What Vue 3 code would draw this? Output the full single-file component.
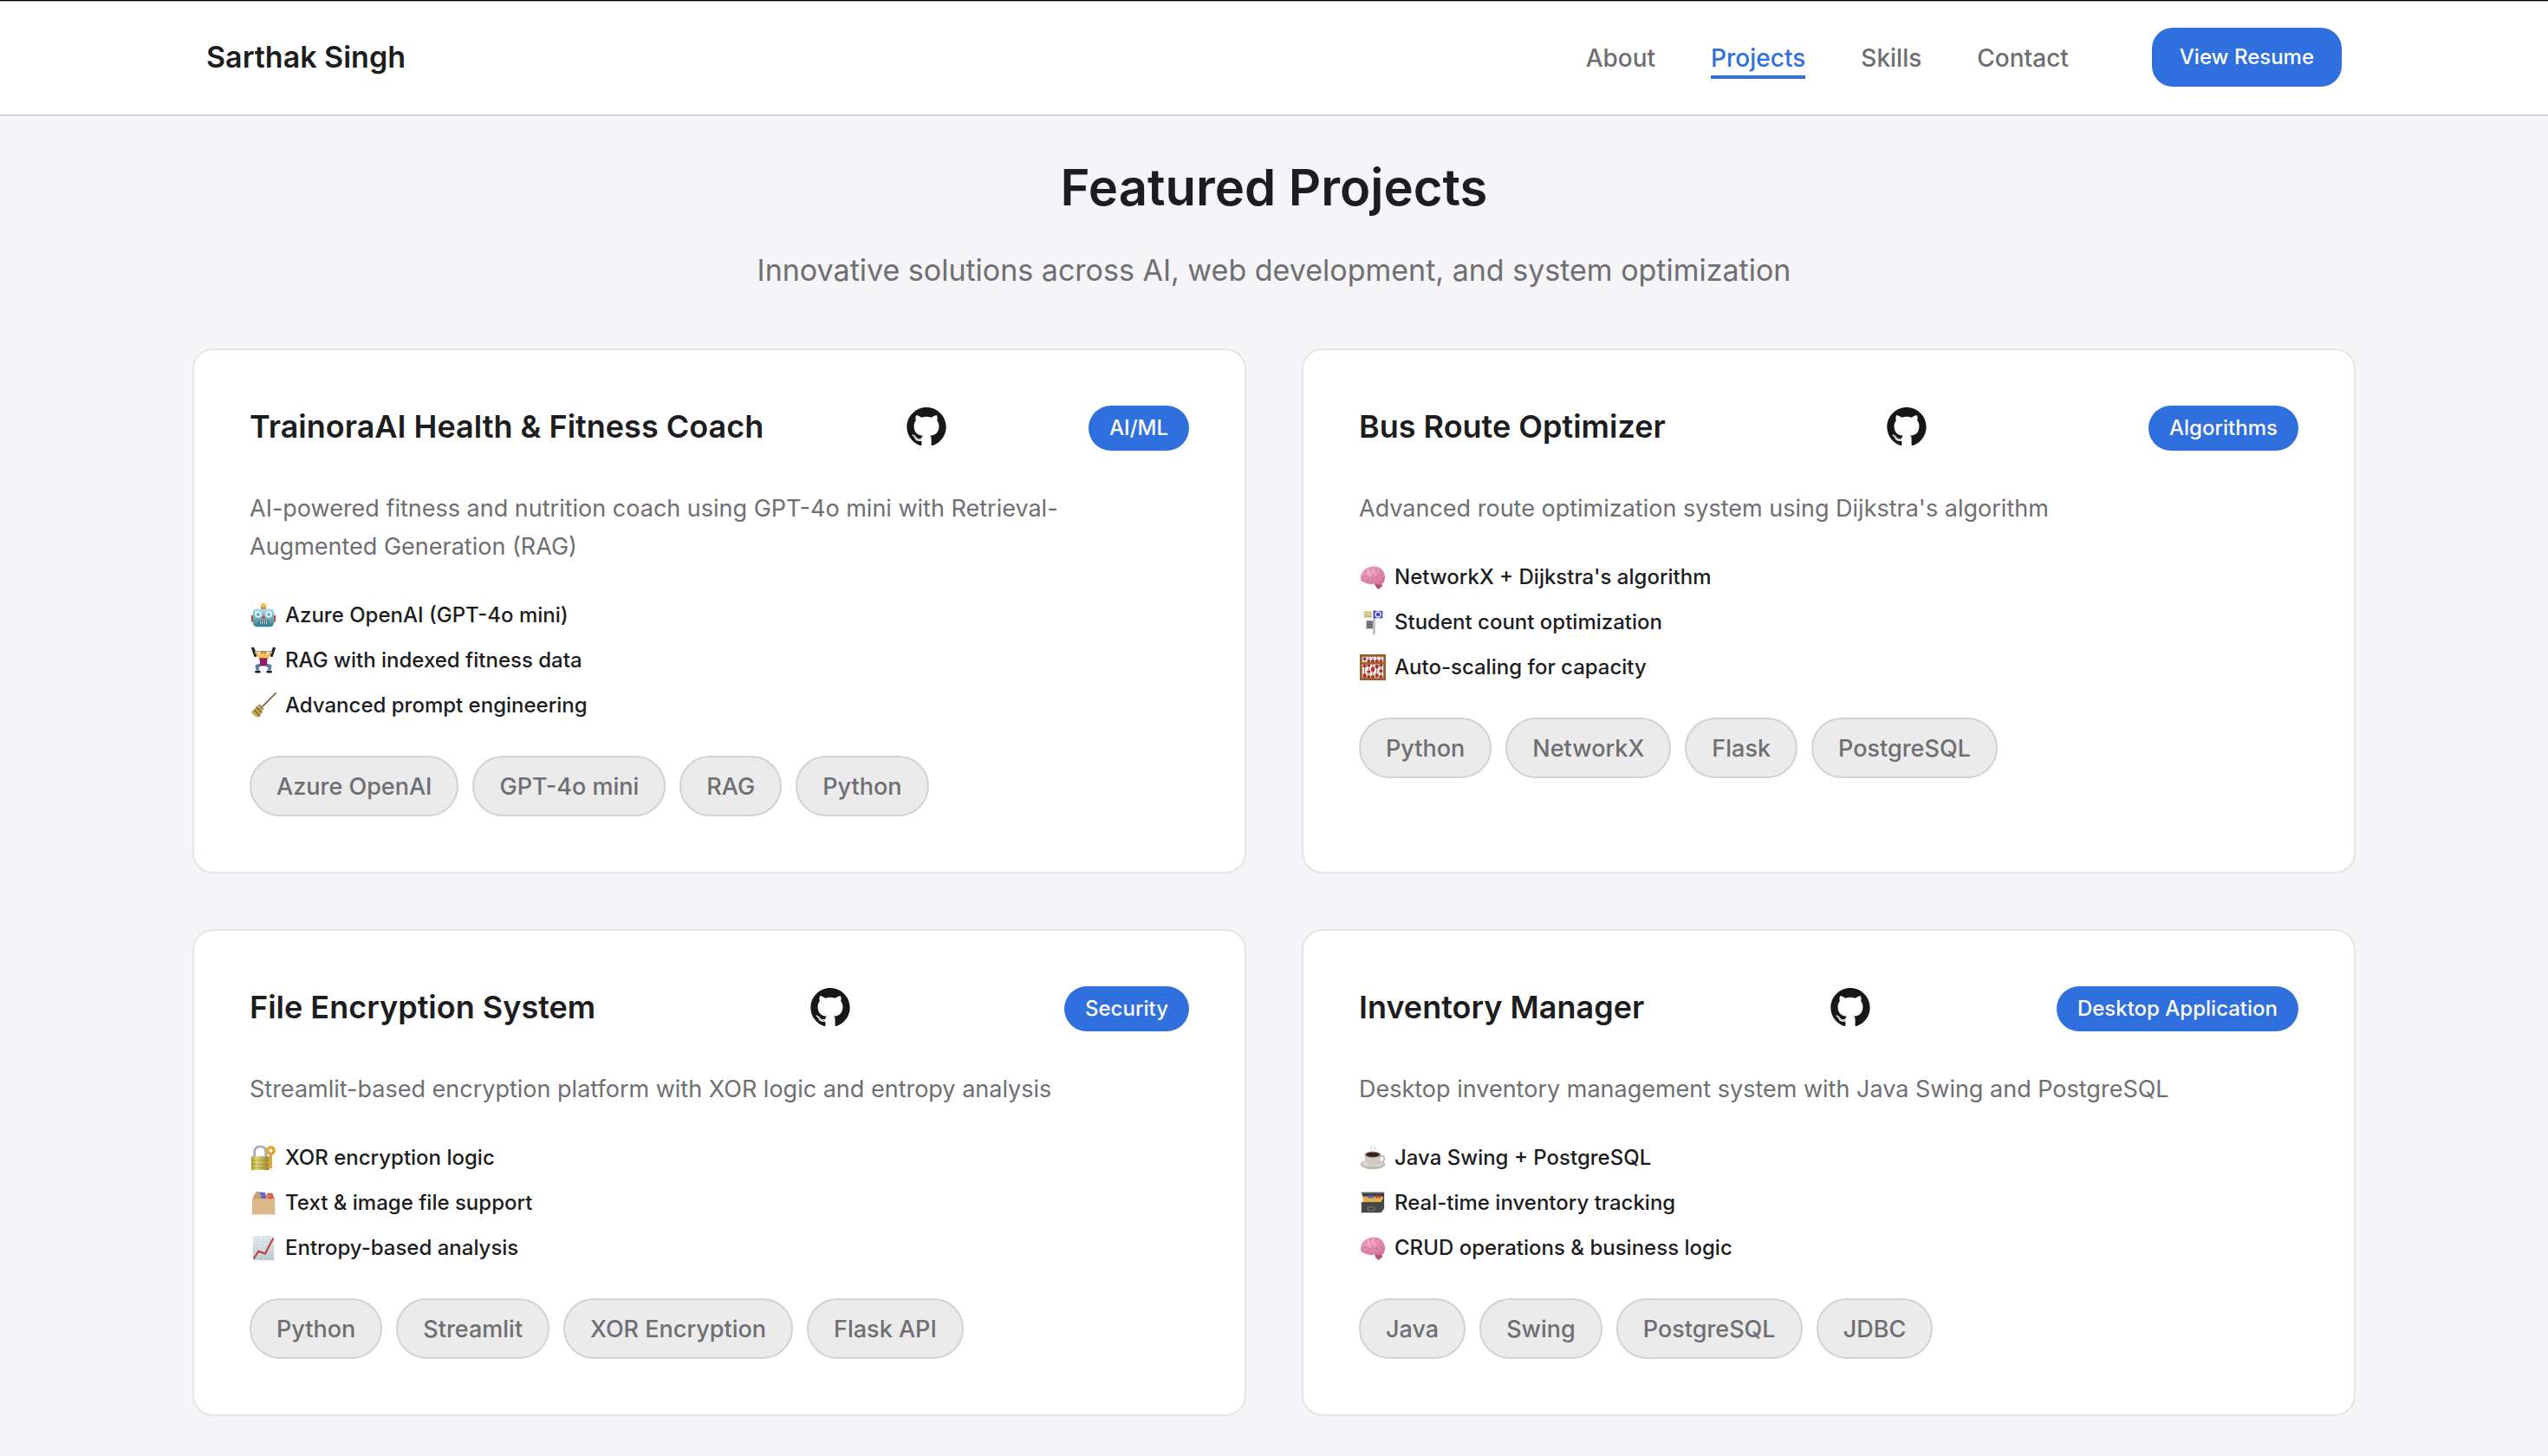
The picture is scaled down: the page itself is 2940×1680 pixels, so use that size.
<script setup>
const navLinks = [
  { label: 'About', href: '#about' },
  { label: 'Projects', href: '#projects', active: true },
  { label: 'Skills', href: '#skills' },
  { label: 'Contact', href: '#contact' },
]

const projects = [
  {
    title: 'TrainoraAI Health & Fitness Coach',
    category: 'AI/ML',
    description:
      'AI-powered fitness and nutrition coach using GPT-4o mini with Retrieval-Augmented Generation (RAG)',
    features: [
      { icon: 'robot', text: 'Azure OpenAI (GPT-4o mini)' },
      { icon: 'lifter', text: 'RAG with indexed fitness data' },
      { icon: 'broom', text: 'Advanced prompt engineering' },
    ],
    tags: ['Azure OpenAI', 'GPT-4o mini', 'RAG', 'Python'],
  },
  {
    title: 'Bus Route Optimizer',
    category: 'Algorithms',
    description: "Advanced route optimization system using Dijkstra's algorithm",
    features: [
      { icon: 'brain', text: "NetworkX + Dijkstra's algorithm" },
      { icon: 'busstop', text: 'Student count optimization' },
      { icon: 'abacus', text: 'Auto-scaling for capacity' },
    ],
    tags: ['Python', 'NetworkX', 'Flask', 'PostgreSQL'],
  },
  {
    title: 'File Encryption System',
    category: 'Security',
    description: 'Streamlit-based encryption platform with XOR logic and entropy analysis',
    features: [
      { icon: 'lock', text: 'XOR encryption logic' },
      { icon: 'dividers', text: 'Text & image file support' },
      { icon: 'chart', text: 'Entropy-based analysis' },
    ],
    tags: ['Python', 'Streamlit', 'XOR Encryption', 'Flask API'],
  },
  {
    title: 'Inventory Manager',
    category: 'Desktop Application',
    description: 'Desktop inventory management system with Java Swing and PostgreSQL',
    features: [
      { icon: 'coffee', text: 'Java Swing + PostgreSQL' },
      { icon: 'filebox', text: 'Real-time inventory tracking' },
      { icon: 'brain', text: 'CRUD operations & business logic' },
    ],
    tags: ['Java', 'Swing', 'PostgreSQL', 'JDBC'],
  },
]
</script>

<template>
  <div class="page">
    <svg class="sprite" aria-hidden="true">
      <defs>
        <linearGradient id="g-robot" x1="0" y1="0" x2="0" y2="1">
          <stop offset="0" stop-color="#b4dfe6" />
          <stop offset="1" stop-color="#2f7f8f" />
        </linearGradient>
        <linearGradient id="g-lock" x1="0" y1="0" x2="1" y2="0">
          <stop offset="0" stop-color="#a79a35" />
          <stop offset="0.3" stop-color="#e2d77a" />
          <stop offset="1" stop-color="#97852b" />
        </linearGradient>
        <linearGradient id="g-paper" x1="0" y1="0" x2="0" y2="1">
          <stop offset="0" stop-color="#e2ecf4" />
          <stop offset="1" stop-color="#bcc6cd" />
        </linearGradient>
        <radialGradient id="g-brain" cx="0.4" cy="0.3" r="0.8">
          <stop offset="0" stop-color="#f7aecb" />
          <stop offset="1" stop-color="#cf6f97" />
        </radialGradient>
      </defs>

      <symbol id="github" viewBox="0 0 128 128">
        <path fill="#181616" fill-rule="evenodd" clip-rule="evenodd" d="M64 5.103c-33.347 0-60.388 27.035-60.388 60.388 0 26.682 17.303 49.317 41.297 57.303 3.017.56 4.125-1.31 4.125-2.905 0-1.44-.056-6.197-.082-11.243-16.8 3.653-20.345-7.125-20.345-7.125-2.747-6.98-6.705-8.836-6.705-8.836-5.48-3.748.413-3.67.413-3.67 6.063.425 9.257 6.223 9.257 6.223 5.386 9.23 14.127 6.562 17.573 5.02.542-3.903 2.107-6.568 3.834-8.076-13.413-1.525-27.514-6.704-27.514-29.843 0-6.593 2.36-11.98 6.223-16.21-.628-1.52-2.695-7.662.584-15.98 0 0 5.07-1.623 16.61 6.19C53.7 35 58.867 34.327 64 34.304c5.13.023 10.3.694 15.127 2.033 11.526-7.813 16.59-6.19 16.59-6.19 3.287 8.317 1.22 14.46.593 15.98 3.872 4.23 6.215 9.617 6.215 16.21 0 23.194-14.127 28.3-27.574 29.796 2.167 1.874 4.097 5.55 4.097 11.183 0 8.08-.07 14.583-.07 16.572 0 1.607 1.088 3.49 4.148 2.897 23.98-7.994 41.263-30.622 41.263-57.294C124.388 32.14 97.35 5.103 64 5.103z" />
        <g fill="#181616">
          <circle cx="25.7" cy="91.5" r="0.9" />
          <circle cx="28.4" cy="94.3" r="1.1" />
          <circle cx="31" cy="98" r="1.3" />
          <circle cx="34.5" cy="101.6" r="1.4" />
          <circle cx="39.2" cy="103.8" r="1.4" />
          <circle cx="44.5" cy="104.3" r="1.4" />
        </g>
      </symbol>

      <symbol id="robot" viewBox="0 0 32 32">
        <rect x="13" y="5" width="6" height="4" fill="#c24a3a" />
        <circle cx="16" cy="4" r="3" fill="#f5b93c" />
        <path d="M1 16h4v8H1zM27 16h4v8h-4z" fill="#c23c35" />
        <path d="M3 12q0-4 4-4h18q4 0 4 4v12q0 6-5 6H8q-5 0-5-6z" fill="url(#g-robot)" />
        <circle cx="9.500" cy="15" r="4" fill="#e9f9fb" />
        <circle cx="22.500" cy="15" r="4" fill="#e9f9fb" />
        <circle cx="9.500" cy="15" r="2.200" fill="#5fb7cd" />
        <circle cx="22.500" cy="15" r="2.200" fill="#5fb7cd" />
        <path d="M16 15l2.500 5h-5z" fill="#d5463b" />
        <rect x="10" y="23" width="12" height="4" fill="#24535e" />
        <path d="M12 23v4M14.700 23v4M17.400 23v4M20 23v4" stroke="#e3f1f2" stroke-width="1.200" />
      </symbol>

      <symbol id="lifter" viewBox="0 0 32 32">
        <path d="M4 5h24" stroke="#8b9096" stroke-width="1.200" />
        <path d="M3 1l3 9M29 1l-3 9" stroke="#26272b" stroke-width="3.600" stroke-linecap="round" />
        <path d="M7 6l5 7M25 6l-5 7" stroke="#f3b94e" stroke-width="3" stroke-linecap="round" />
        <circle cx="16" cy="9" r="4" fill="#f7c455" />
        <path d="M12 9q0-5 4-5t4 5q-2-2-4-2t-4 2z" fill="#c98b2c" />
        <path d="M11 13h10l-1 10h-8z" fill="#8d1f5b" />
        <path d="M12 22l-4 1 1 5M20 22l4 1-1 5" fill="none" stroke="#4e7da6" stroke-width="4" stroke-linejoin="round" />
        <path d="M7 30h4M21 30h4" stroke="#1f2024" stroke-width="3" stroke-linecap="round" />
      </symbol>

      <symbol id="broom" viewBox="0 0 32 32">
        <path d="M31 1L13 19" stroke="#8a6648" stroke-width="2" stroke-linecap="round" />
        <path d="M9 16l6 6q-2 5-5 9-6-2-9-7 4-3 8-8z" fill="#c4aa56" />
        <path d="M7 18l7 7M4 21l8 8" stroke="#7d6a2e" stroke-width="1.600" />
        <path d="M10 15l6 6" stroke="#9a7a3a" stroke-width="2" />
      </symbol>

      <symbol id="brain" viewBox="0 0 32 32">
        <path d="M18 23l8-1 2 5-5 4q-4-2-5-8z" fill="#b5556f" />
        <path d="M1 17Q1 9 8 5q8-4 16-1 7 4 7 12 0 8-6 9-5 0-6-2-4 3-8 1-3 0-5-2-5 0-5-5z" fill="url(#g-brain)" />
        <path d="M8 6q1 4-2 6M14 4q-3 4 1 7t-2 6M21 4q-3 3 0 6t-1 6M26 7q-2 3 1 6M4 16q4-3 8 1M14 19q5-5 9-1M24 14q4 1 5 5M7 22q1-4 5-3" fill="none" stroke="#b95582" stroke-width="1" opacity="0.600" />
      </symbol>

      <symbol id="busstop" viewBox="0 0 32 32">
        <rect x="16" y="1" width="3" height="30" fill="#b9bcc0" />
        <rect x="5" y="2" width="10" height="9" fill="#eadf9b" />
        <path d="M6 4h8M6 7h8M6 9h8" stroke="#8a8770" stroke-width="1" stroke-dasharray="2 1" />
        <rect x="17" y="2" width="11" height="9" fill="#3b45cf" />
        <circle cx="22.500" cy="6.500" r="3.200" fill="none" stroke="#e7e8fa" stroke-width="1.600" />
        <rect x="8" y="14" width="8" height="10" fill="#808285" />
        <path d="M9 16h6M9 19h6M9 22h6" stroke="#515356" stroke-width="1" />
      </symbol>

      <symbol id="abacus" viewBox="0 0 32 32">
        <rect width="32" height="32" fill="#94602c" />
        <rect x="3" y="3" width="26" height="7" fill="#f4efeb" />
        <rect x="3" y="12" width="26" height="17" fill="#f4efeb" />
        <path d="M6 3v26M11 3v26M16 3v26M21 3v26M26 3v26" stroke="#8d6a5a" stroke-width="1" />
        <g fill="#b32823">
          <path d="M4 4h4v3H4zM9 7h4v3H9zM14 7h4v3h-4zM19 7h4v3h-4zM24 7h4v3h-4z" />
          <path d="M4 12h4v4H4zM4 24h4v5H4zM9 12h4v3H9zM9 20h4v3H9zM9 26h4v3H9zM14 16h4v5h-4zM14 26h4v3h-4zM19 13h4v4h-4zM19 24h4v4h-4zM24 12h4v3h-4zM24 19h4v3h-4zM24 26h4v3h-4z" />
        </g>
        <rect x="3" y="10" width="26" height="2" fill="#94602c" />
      </symbol>

      <symbol id="lock" viewBox="0 0 32 32">
        <path d="M5 15V9q0-7 7-7t7 7v6" fill="none" stroke="#a3adb8" stroke-width="3" />
        <rect x="1" y="14" width="22" height="17" rx="1" fill="url(#g-lock)" />
        <path d="M1 19h22M1 24h22M1 28h22" stroke="#8a7a2b" stroke-width="0.800" opacity="0.600" />
        <circle cx="25" cy="7" r="4" fill="none" stroke="#e3a93a" stroke-width="4" />
        <path d="M25 12v17M25 22h-4M25 27h-4" stroke="#dba035" stroke-width="3" />
      </symbol>

      <symbol id="dividers" viewBox="0 0 32 32">
        <path d="M3 9l4-7h5l2 3h14l2 7v18H3z" fill="#c99f6b" />
        <path d="M12 3h6v3h-6zM13 7h6v3h-6z" fill="#4a5bd8" />
        <path d="M21 4h6v3h-6zM22 8h6v3h-6z" fill="#d9503f" />
        <path d="M2 11h28v19H2z" fill="#dcb78a" />
      </symbol>

      <symbol id="chart" viewBox="0 0 32 32">
        <rect x="3" y="1" width="26" height="30" fill="url(#g-paper)" />
        <path d="M9 1v30M16 1v30M23 1v30M3 8h26M3 16h26M3 24h26" stroke="#cbd7e0" stroke-width="0.800" />
        <path d="M4 29l6-9 8 3L28 4" fill="none" stroke="#c02f2a" stroke-width="2" />
      </symbol>

      <symbol id="coffee" viewBox="0 0 32 32">
        <path d="M15 7q-3-3 0-6M18 7q2-3-1-5" fill="none" stroke="#d4d4d4" stroke-width="1.400" />
        <ellipse cx="16" cy="24" rx="15" ry="6" fill="#bdb9b0" />
        <ellipse cx="16" cy="23" rx="13" ry="4" fill="#e0ddd6" />
        <path d="M25 14q6-1 5 4t-7 4" fill="none" stroke="#bfbbb2" stroke-width="2" />
        <path d="M6 12h20q0 11-6 14h-8q-6-3-6-14z" fill="#cfcbc2" />
        <ellipse cx="16" cy="12" rx="10" ry="4" fill="#a8a39a" />
        <ellipse cx="16" cy="12" rx="8.500" ry="3" fill="#38211a" />
      </symbol>

      <symbol id="filebox" viewBox="0 0 32 32">
        <path d="M2 3h28v6H4z" fill="#3a3d40" />
        <path d="M2 3h28v2H2z" fill="#5b5f63" />
        <path d="M4 8h24l-2 9H4z" fill="#e8b04b" />
        <path d="M10 7h7v3h-7z" fill="#4a68b8" />
        <path d="M19 7h7v3h-7z" fill="#c9503a" />
        <path d="M2 15h24l4-8v16l-4 5H2z" fill="#45484b" />
        <path d="M10 21h8v4h-8z" fill="none" stroke="#73777b" stroke-width="1.200" />
      </symbol>
    </svg>

    <header class="topbar">
      <div class="topbar-inner">
        <a class="brand" href="#home">Sarthak Singh</a>
        <div class="topbar-right">
          <nav class="nav" aria-label="Main">
            <a
              v-for="link in navLinks"
              :key="link.label"
              :href="link.href"
              class="nav-link"
              :class="{ active: link.active }"
              >{{ link.label }}</a
            >
          </nav>
          <button type="button" class="resume">View Resume</button>
        </div>
      </div>
    </header>

    <main id="projects" class="projects">
      <h2 class="heading">Featured Projects</h2>
      <p class="subheading">Innovative solutions across AI, web development, and system optimization</p>

      <div class="grid">
        <article v-for="project in projects" :key="project.title" class="card">
          <div class="card-head">
            <h3 class="card-title">{{ project.title }}</h3>
            <a class="repo" href="#github" :aria-label="project.title + ' on GitHub'">
              <svg class="repo-icon"><use href="#github" /></svg>
            </a>
            <span class="badge">{{ project.category }}</span>
          </div>
          <p class="description">{{ project.description }}</p>
          <ul class="features">
            <li v-for="feature in project.features" :key="feature.text" class="feature">
              <svg class="feature-icon" aria-hidden="true"><use :href="'#' + feature.icon" /></svg>
              <span>{{ feature.text }}</span>
            </li>
          </ul>
          <ul class="tags">
            <li v-for="tag in project.tags" :key="tag" class="tag">{{ tag }}</li>
          </ul>
        </article>
      </div>
    </main>
  </div>
</template>

<style>
body {
  background: #f5f5f7;
}
</style>

<style scoped>
.page {
  min-height: 100vh;
  background: #f5f5f7;
  color: #1d1d1f;
  font-family: Inter, 'Liberation Sans', sans-serif;
}

.sprite {
  position: absolute;
  width: 0;
  height: 0;
}

.topbar {
  background: #fff;
  border-top: 1px solid #000;
  border-bottom: 2px solid #d2d2d7;
  box-shadow: inset 0 1px #b4b4b4;
}

.topbar-inner {
  display: flex;
  align-items: center;
  justify-content: space-between;
  box-sizing: border-box;
  max-width: 2560px;
  margin: 0 auto;
  padding: 31px 48px 32px;
}

.brand {
  color: #1d1d1f;
  font-size: 34px;
  font-weight: 600;
  line-height: 48px;
  text-decoration: none;
}

.topbar-right {
  display: flex;
  align-items: center;
  gap: 96px;
}

.nav {
  display: flex;
  gap: 64px;
}

.nav-link {
  padding-top: 6px;
  border-bottom: 4px solid transparent;
  color: #6e6e73;
  font-size: 28px;
  font-weight: 500;
  line-height: 40px;
  text-decoration: none;
}

.nav-link.active {
  border-bottom-color: #2f6fde;
  color: #2f6fde;
}

.resume {
  padding: 16px 32px;
  border: 0;
  border-radius: 24px;
  background: #2f6fde;
  color: #fff;
  font-family: inherit;
  font-size: 24px;
  font-weight: 500;
  line-height: 36px;
}

.projects {
  box-sizing: border-box;
  max-width: 2560px;
  margin: 0 auto;
  padding: 44px 32px;
}

.heading {
  margin: 0;
  font-size: 58px;
  font-weight: 600;
  line-height: 76px;
  text-align: center;
}

.subheading {
  margin: 28px 0 60px;
  color: #6e6e73;
  font-size: 34px;
  line-height: 60px;
  text-align: center;
}

.grid {
  display: grid;
  grid-template-columns: 1fr 1fr;
  gap: 64px;
}

.card {
  padding: 64px;
  border: 2px solid #e5e5e5;
  border-radius: 24px;
  background: #fff;
}

.card-head {
  display: flex;
  align-items: flex-start;
  justify-content: space-between;
  margin-bottom: 45px;
}

.card-title {
  margin: 0;
  font-size: 36px;
  font-weight: 600;
  line-height: 48px;
}

.repo {
  display: block;
  height: 48px;
}

.repo-icon {
  display: block;
  width: 48px;
  height: 48px;
}

.badge {
  padding: 8px 24px;
  border-radius: 26px;
  background: #2f6fde;
  color: #fff;
  font-size: 24px;
  font-weight: 500;
  line-height: 36px;
}

.description {
  margin: 0 0 31px;
  padding-right: 24px;
  color: #6e6e73;
  font-size: 27px;
  line-height: 44px;
}

.features,
.tags {
  margin: 0;
  padding: 0;
  list-style: none;
}

.features {
  margin-bottom: 32px;
}

.feature {
  display: flex;
  align-items: center;
  gap: 9px;
  font-size: 24px;
  font-weight: 500;
  line-height: 52px;
}

.feature-icon {
  width: 32px;
  height: 30px;
}

.tags {
  display: flex;
  flex-wrap: wrap;
  gap: 16px;
}

.tag {
  padding: 14px 29px 12px;
  border: 2px solid #d2d2d7;
  border-radius: 35px;
  background: #ebebeb;
  color: #6e6e73;
  font-size: 27px;
  font-weight: 500;
  line-height: 40px;
}
</style>
